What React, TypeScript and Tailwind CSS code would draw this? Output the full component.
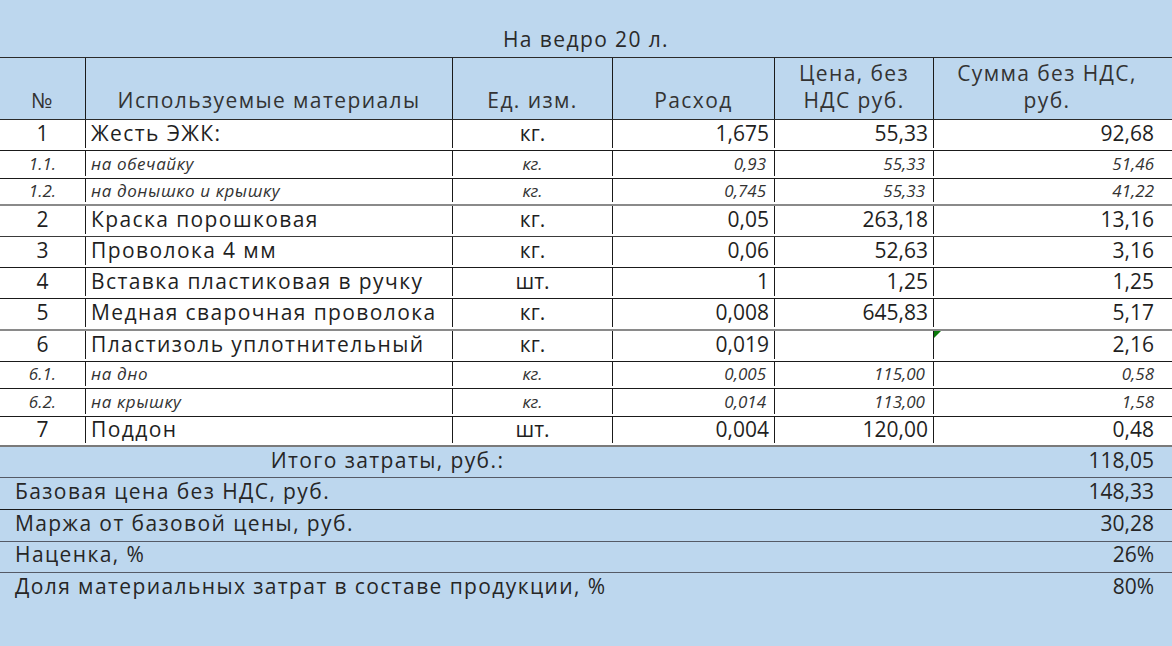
import React from 'react';

type Row = {
  n: string;
  name: string;
  unit: string;
  qty: string;
  price: string;
  sum: string;
  h: string;
  sub?: boolean;
  line: string;
  flag?: boolean;
};

const rows: Row[] = [
  { n: '1', name: 'Жесть ЭЖК:', unit: 'кг.', qty: '1,675', price: '55,33', sum: '92,68', h: 'h-[31px]', line: 'border-b border-[#1a1a1a]' },
  { n: '1.1.', name: 'на обечайку', unit: 'кг.', qty: '0,93', price: '55,33', sum: '51,46', h: 'h-[28px]', sub: true, line: 'border-b border-[#1a1a1a]' },
  { n: '1.2.', name: 'на донышко и крышку', unit: 'кг.', qty: '0,745', price: '55,33', sum: '41,22', h: 'h-[27px]', sub: true, line: 'border-b-2 border-[#8a8a8a]' },
  { n: '2', name: 'Краска порошковая', unit: 'кг.', qty: '0,05', price: '263,18', sum: '13,16', h: 'h-[31px]', line: 'border-b border-[#3a3a3a]' },
  { n: '3', name: 'Проволока 4 мм', unit: 'кг.', qty: '0,06', price: '52,63', sum: '3,16', h: 'h-[31px]', line: 'border-b border-[#1a1a1a]' },
  { n: '4', name: 'Вставка пластиковая в ручку', unit: 'шт.', qty: '1', price: '1,25', sum: '1,25', h: 'h-[31px]', line: 'border-b border-[#1a1a1a]' },
  { n: '5', name: 'Медная сварочная проволока', unit: 'кг.', qty: '0,008', price: '645,83', sum: '5,17', h: 'h-[32px]', line: 'border-b-2 border-[#8a8a8a]' },
  { n: '6', name: 'Пластизоль уплотнительный', unit: 'кг.', qty: '0,019', price: '', sum: '2,16', h: 'h-[31px]', line: 'border-b border-[#1a1a1a]', flag: true },
  { n: '6.1.', name: 'на дно', unit: 'кг.', qty: '0,005', price: '115,00', sum: '0,58', h: 'h-[27px]', sub: true, line: 'border-b border-[#1a1a1a]' },
  { n: '6.2.', name: 'на крышку', unit: 'кг.', qty: '0,014', price: '113,00', sum: '1,58', h: 'h-[28px]', sub: true, line: 'border-b border-[#1a1a1a]' },
  { n: '7', name: 'Поддон', unit: 'шт.', qty: '0,004', price: '120,00', sum: '0,48', h: 'h-[30px]', line: 'border-b-2 border-[#7a7a7a]' },
];

const summary = [
  { label: 'Базовая цена без НДС, руб.', value: '148,33', line: 'border-b border-[#1a1a1a]' },
  { label: 'Маржа от базовой цены, руб.', value: '30,28', line: 'border-b border-[#555a66]' },
  { label: 'Наценка, %', value: '26%', line: 'border-b border-[#555a66]' },
  { label: 'Доля материальных затрат в составе продукции, %', value: '80%', line: '' },
];

const font = { fontFamily: "'Open Sans', 'DejaVu Sans', sans-serif" };

export default function App() {
  return (
    <div className="w-[1172px] h-[646px] bg-[#bdd7ee] text-[#222] overflow-hidden" style={font}>
      {/* Title */}
      <div className="h-[57px] flex items-end justify-center pb-[4px] text-[21px] leading-[27px] tracking-[1.4px] text-[#2a2a2a]">
        На ведро 20 л.
      </div>

      {/* Header */}
      <div className="flex h-[63px] border-t border-b border-[#2a2a2a] text-[21px] leading-[27px] tracking-[1.4px] text-[#333]">
        <div className="w-[86px] shrink-0 border-r border-[#1a1a1a] flex items-end justify-center pb-[5px]">№</div>
        <div className="w-[367px] shrink-0 border-r border-[#1a1a1a] flex items-end justify-center pb-[5px]">Используемые материалы</div>
        <div className="w-[160px] shrink-0 border-r border-[#1a1a1a] flex items-end justify-center pb-[5px]">Ед. изм.</div>
        <div className="w-[162px] shrink-0 border-r border-[#1a1a1a] flex items-end justify-center pb-[5px]">Расход</div>
        <div className="w-[159px] shrink-0 border-r border-[#1a1a1a] flex items-end justify-center text-center pb-[5px]">
          Цена, без<br />НДС руб.
        </div>
        <div className="flex-1 flex items-end justify-center text-center pb-[5px] pr-[12px]">
          Сумма без НДС,<br />руб.
        </div>
      </div>

      {/* Body */}
      <div className="bg-white">
        {rows.map((r) => {
          const size = r.sub ? 'text-[17px] italic text-[#333]' : 'text-[21px] text-[#1f1f1f]';
          const track = r.sub ? 'tracking-[0.6px]' : 'tracking-[1.4px]';
          const numPad = r.sub ? 'pr-[8px]' : 'pr-[5px]';
          return (
            <div key={r.n} className={`flex box-border pb-[2px] ${r.h} ${r.line} ${size}`}>
              <div className="w-[86px] shrink-0 border-r border-[#1a1a1a] flex items-center justify-center">{r.n}</div>
              <div className={`w-[367px] shrink-0 border-r border-[#1a1a1a] flex items-center pl-[5px] whitespace-nowrap ${track}`}>{r.name}</div>
              <div className="w-[160px] shrink-0 border-r border-[#1a1a1a] flex items-center justify-center">{r.unit}</div>
              <div className={`w-[162px] shrink-0 border-r border-[#1a1a1a] flex items-center justify-end ${numPad}`}>{r.qty}</div>
              <div className={`w-[159px] shrink-0 border-r border-[#1a1a1a] flex items-center justify-end ${numPad}`}>{r.price}</div>
              <div className="relative flex-1 flex items-center justify-end pr-[18px]">
                {r.flag && (
                  <span className="absolute left-0 top-0 w-0 h-0 border-t-[7px] border-r-[7px] border-t-[#0a7a0a] border-r-transparent" />
                )}
                {r.sum}
              </div>
            </div>
          );
        })}
      </div>

      {/* Totals */}
      <div className="text-[21px] text-[#262626]">
        <div className="flex h-[31px] border-b border-[#555a66] items-center pb-[2px]">
          <div className="w-[775px] shrink-0 text-center tracking-[1.4px]">Итого затраты, руб.:</div>
          <div className="flex-1 text-right pr-[18px]">118,05</div>
        </div>
        {summary.map((s, i) => (
          <div key={s.label} className={`flex ${i === 2 ? 'h-[31px]' : 'h-[32px]'} items-center pb-[4px] ${s.line}`}>
            <div className="flex-1 pl-[15px] whitespace-nowrap tracking-[1.4px]">{s.label}</div>
            <div className="text-right pr-[18px]">{s.value}</div>
          </div>
        ))}
      </div>
    </div>
  );
}
